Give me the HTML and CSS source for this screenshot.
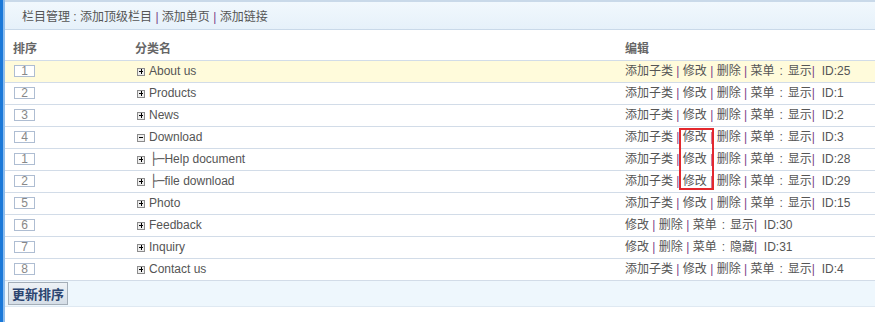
FILE: index.html
```html
<!DOCTYPE html>
<html lang="zh-CN">
<head>
  <meta charset="utf-8" />
  <title>栏目管理</title>
  <link rel="stylesheet" href="styles.css">
</head>
<body>
  <div class="page">
    <div class="topbar">栏目管理 : <a href="#">添加顶级栏目</a> <i>|</i> <a href="#">添加单页</a> <i>|</i> <a href="#">添加链接</a></div>

    <table class="list">
      <thead>
        <tr>
          <th class="c-order">排序</th>
          <th class="c-name">分类名</th>
          <th class="c-edit">编辑</th>
        </tr>
      </thead>
      <tbody>
        <tr class="on">
          <td class="c-order"><input class="ord" value="1"></td>
          <td class="c-name"><span class="tg"></span>About us</td>
          <td class="c-edit"><a href="#">添加子类</a> <i>|</i> <a href="#">修改</a> <i>|</i> <a href="#">删除</a> <i>|</i> 菜单<b>:</b><a href="#">显示</a><i>|</i>&nbsp; ID:25</td>
        </tr>
        <tr>
          <td class="c-order"><input class="ord" value="2"></td>
          <td class="c-name"><span class="tg"></span>Products</td>
          <td class="c-edit"><a href="#">添加子类</a> <i>|</i> <a href="#">修改</a> <i>|</i> <a href="#">删除</a> <i>|</i> 菜单<b>:</b><a href="#">显示</a><i>|</i>&nbsp; ID:1</td>
        </tr>
        <tr>
          <td class="c-order"><input class="ord" value="3"></td>
          <td class="c-name"><span class="tg"></span>News</td>
          <td class="c-edit"><a href="#">添加子类</a> <i>|</i> <a href="#">修改</a> <i>|</i> <a href="#">删除</a> <i>|</i> 菜单<b>:</b><a href="#">显示</a><i>|</i>&nbsp; ID:2</td>
        </tr>
        <tr>
          <td class="c-order"><input class="ord" value="4"></td>
          <td class="c-name"><span class="tg open"></span>Download</td>
          <td class="c-edit"><a href="#">添加子类</a> <i>|</i> <a href="#">修改</a> <i>|</i> <a href="#">删除</a> <i>|</i> 菜单<b>:</b><a href="#">显示</a><i>|</i>&nbsp; ID:3</td>
        </tr>
        <tr>
          <td class="c-order"><input class="ord" value="1"></td>
          <td class="c-name"><span class="tg"></span><span class="br">├─</span>Help document</td>
          <td class="c-edit"><a href="#">添加子类</a> <i>|</i> <a href="#">修改</a> <i>|</i> <a href="#">删除</a> <i>|</i> 菜单<b>:</b><a href="#">显示</a><i>|</i>&nbsp; ID:28</td>
        </tr>
        <tr>
          <td class="c-order"><input class="ord" value="2"></td>
          <td class="c-name"><span class="tg"></span><span class="br">├─</span>file download</td>
          <td class="c-edit"><a href="#">添加子类</a> <i>|</i> <a href="#">修改</a> <i>|</i> <a href="#">删除</a> <i>|</i> 菜单<b>:</b><a href="#">显示</a><i>|</i>&nbsp; ID:29</td>
        </tr>
        <tr>
          <td class="c-order"><input class="ord" value="5"></td>
          <td class="c-name"><span class="tg"></span>Photo</td>
          <td class="c-edit"><a href="#">添加子类</a> <i>|</i> <a href="#">修改</a> <i>|</i> <a href="#">删除</a> <i>|</i> 菜单<b>:</b><a href="#">显示</a><i>|</i>&nbsp; ID:15</td>
        </tr>
        <tr>
          <td class="c-order"><input class="ord" value="6"></td>
          <td class="c-name"><span class="tg"></span>Feedback</td>
          <td class="c-edit"><a href="#">修改</a> <i>|</i> <a href="#">删除</a> <i>|</i> 菜单<b>:</b><a href="#">显示</a><i>|</i>&nbsp; ID:30</td>
        </tr>
        <tr>
          <td class="c-order"><input class="ord" value="7"></td>
          <td class="c-name"><span class="tg"></span>Inquiry</td>
          <td class="c-edit"><a href="#">修改</a> <i>|</i> <a href="#">删除</a> <i>|</i> 菜单<b>:</b><a href="#">隐藏</a><i>|</i>&nbsp; ID:31</td>
        </tr>
        <tr>
          <td class="c-order"><input class="ord" value="8"></td>
          <td class="c-name"><span class="tg"></span>Contact us</td>
          <td class="c-edit"><a href="#">添加子类</a> <i>|</i> <a href="#">修改</a> <i>|</i> <a href="#">删除</a> <i>|</i> 菜单<b>:</b><a href="#">显示</a><i>|</i>&nbsp; ID:4</td>
        </tr>
      </tbody>
    </table>

    <div class="footbar">
      <button class="btn">更新排序</button>
    </div>

    <!-- annotation box drawn over the screenshot -->
    <div class="mark"></div>
  </div>
</body>
</html>
```

FILE: styles.css
```css
* {
  box-sizing: border-box;
}

html, body {
  height: 100%;
}

body {
  margin: 0;
  background: #fff;
  font: 12px "Liberation Sans", Arial, "Noto Sans CJK SC", sans-serif;
  color: #555;
}

a {
  color: #555;
  text-decoration: none;
}

i {
  font-style: normal;
  color: #7a3f88;
}

/* menu colon, spaced like a full-width one */
b {
  font-weight: normal;
  margin: 0 5px;
}

.page {
  position: relative;
  min-height: 100%;
  border-left: 3px solid #1a78d8;
  padding-left: 2px;
  background: linear-gradient(to right, #8dbcec 0, #8dbcec 2px, transparent 2px) no-repeat;
}

.topbar {
  height: 30px;
  border-top: 2px solid #c9d9e9;
  border-bottom: 1px solid #c9d9e9;
  background: linear-gradient(#f1f8fd, #e6f1fa);
  padding: 6px 0 0 17px;
  line-height: 18px;
}

.list {
  width: 870px;
  border-collapse: collapse;
  table-layout: fixed;
}

.list th {
  height: 30px;
  padding: 0 0 4px 8px;
  text-align: left;
  vertical-align: bottom;
  font-weight: bold;
  font-size: 12px;
  color: #666;
  border-bottom: 1px solid #d2dce8;
}

.list td {
  height: 22px;
  padding: 0 0 0 8px;
  border-bottom: 1px solid #d2dce8;
  white-space: nowrap;
  line-height: 20px;
}

.list tr.on td {
  background: #fffbdb;
}

.c-order {
  width: 122px;
}

.c-name {
  width: 490px;
}

.list td.c-order {
  padding-left: 9px;
}

.list td.c-name {
  padding-left: 10px;
}

.ord {
  display: block;
  width: 21px;
  height: 12px;
  padding: 0;
  border: 1px solid #aebdd2;
  background: #fff;
  font: 12px "Liberation Sans", Arial, sans-serif;
  line-height: 10px;
  color: #888;
  text-align: center;
}

.tg {
  display: inline-block;
  position: relative;
  width: 8px;
  height: 8px;
  margin-right: 4px;
  border: 1px solid #8c8c8c;
  background: #eee;
  vertical-align: -1px;
}

.tg::before,
.tg::after {
  content: "";
  position: absolute;
  background: #000;
}

.tg::before {
  left: 1px;
  top: 2px;
  width: 4px;
  height: 1px;
}

.tg::after {
  left: 3px;
  top: 0;
  width: 1px;
  height: 5px;
}

.tg.open::after {
  display: none;
}

.br {
  font-family: "DejaVu Sans", sans-serif;
  font-size: 12px;
  margin-left: 1px;
  color: #555;
}

.footbar {
  height: 26px;
  padding: 1px 0 0 3px;
  background: #eef7fd;
  border-bottom: 1px solid #dfe9f2;
}

.btn {
  width: 60px;
  height: 23px;
  padding: 0;
  border: 1px solid #a4aeb8;
  background: linear-gradient(#eef2f6, #d5dee7);
  font: bold 13px "Liberation Sans", "Noto Sans CJK SC", sans-serif;
  color: #2b4470;
}

.mark {
  position: absolute;
  left: 676px;
  top: 128px;
  width: 35px;
  height: 62px;
  border: 2px solid #e3282d;
}
```
